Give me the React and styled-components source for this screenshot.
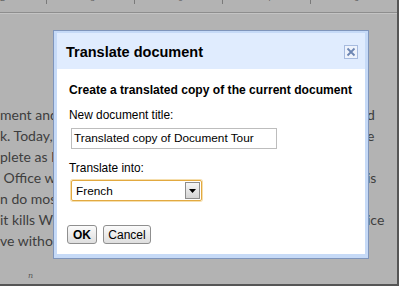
import React from "react";
import styled, { createGlobalStyle } from "styled-components";

const Global = createGlobalStyle`
    html, body {
        margin: 0;
        background: #ffffff;
    }
`;

const lines = [
    { left: "ment and", right: "d" },
    { left: "k. Today,", right: "e" },
    { left: "plete as M", right: "" },
    { left: " Office w", right: "is" },
    { left: "n do mos", right: "" },
    { left: "it kills W", right: "ice" },
    { left: "ve withou", right: "" },
];

const rulerMarks = ["2", "", "8", "", "0", "", "4", "", "6", ""];

function Ruler() {
    return (
        <RulerBar>
            {rulerMarks.map((m, i) => (
                <Mark key={i}>{m ? <Digit>{m}</Digit> : <Tick />}</Mark>
            ))}
        </RulerBar>
    );
}

function CloseIcon() {
    return (
        <svg width="10" height="10" viewBox="0 0 10 10">
            <path d="M1.5 1.5 L8.5 8.5 M8.5 1.5 L1.5 8.5" stroke="#6d86b3" strokeWidth="1.8" />
        </svg>
    );
}

function Dialog() {
    return (
        <Frame>
            <Header>
                <Title>Translate document</Title>
                <CloseBox>
                    <CloseIcon />
                </CloseBox>
            </Header>
            <Content>
                <Lead>Create a translated copy of the current document</Lead>
                <Label>New document title:</Label>
                <TextInput>Translated copy of Document Tour</TextInput>
                <Label $gap={12}>Translate into:</Label>
                <Select>
                    <SelectValue>French</SelectValue>
                    <SelectArrow>
                        <svg width="7" height="4" viewBox="0 0 7 4">
                            <path d="M0 0 H7 L3.5 4 Z" fill="#000" />
                        </svg>
                    </SelectArrow>
                </Select>
                <Buttons>
                    <Button $bold $w={30}>OK</Button>
                    <Button $w={48}>Cancel</Button>
                </Buttons>
            </Content>
        </Frame>
    );
}

export default function App() {
    return (
        <>
            <Global />
            <Page>
                <Ruler />
                <Body>
                    {lines.map((l, i) => (
                        <Line key={i}>
                            <LeftText>{l.left}</LeftText>
                            <RightText>{l.right}</RightText>
                        </Line>
                    ))}
                    <Footer>n</Footer>
                    <Dialog />
                </Body>
            </Page>
        </>
    );
}

const Page = styled.div`
    width: 399px;
    height: 286px;
    box-sizing: border-box;
    background: #b3b3b3;
    border-right: 2px solid #555;
    border-bottom: 2px solid #555;
    display: flex;
    flex-direction: column;
    overflow: hidden;
`;
const RulerBar = styled.div`
    height: 12px;
    flex: none;
    display: flex;
    border-bottom: 1px solid #8e8e8e;
    box-shadow: 0 1px 0 #c4c4c4;
    overflow: hidden;
`;
const Mark = styled.div`
    width: 44px;
    flex: none;
    display: flex;
    justify-content: flex-start;
    align-items: flex-start;
    &:first-child {
        width: 46px;
    }
`;
const Digit = styled.span`
    font-family: "Liberation Sans", Arial, sans-serif;
    font-size: 9px;
    line-height: 9px;
    color: #666;
    margin-top: -6px;
`;
const Tick = styled.span`
    width: 1px;
    height: 4px;
    background: #7a7a7a;
`;
const Body = styled.div`
    position: relative;
    flex: 1;
    display: flex;
    flex-direction: column;
    padding-top: 91px;
`;
const Line = styled.div`
    display: grid;
    grid-template-columns: 54px 1fr;
    column-gap: 313px;
    height: 21px;
    line-height: 21px;
    font-family: Lato, "Open Sans", sans-serif;
    font-size: 14px;
    color: #3e3e3e;
`;
const LeftText = styled.span`
    white-space: pre;
    overflow: hidden;
`;
const RightText = styled.span`
    white-space: pre;
    overflow: hidden;
`;
const Footer = styled.div`
    margin-top: auto;
    padding: 0 0 3px 28px;
    font-family: "DejaVu Serif", serif;
    font-style: italic;
    font-size: 8px;
    line-height: 10px;
    color: #555;
`;
const Frame = styled.div`
    position: absolute;
    left: 53px;
    top: 17px;
    width: 316px;
    height: 229px;
    box-sizing: border-box;
    border: 1px solid #7f95bb;
    background: #c6daf7;
    padding: 2px 3px 4px 3px;
    display: flex;
    flex-direction: column;
    font-family: "Liberation Sans", Arial, sans-serif;
    color: #000;
`;
const Header = styled.div`
    height: 36px;
    flex: none;
    background: #e0ecfe;
    display: flex;
    align-items: center;
    justify-content: space-between;
    padding: 2px 7px 0 9px;
    box-sizing: border-box;
`;
const Title = styled.div`
    font-size: 14.5px;
    font-weight: bold;
`;
const CloseBox = styled.div`
    width: 14px;
    height: 14px;
    box-sizing: border-box;
    border: 1px solid #a7bbdf;
    background: #eef3fc;
    display: flex;
    align-items: center;
    justify-content: center;
`;
const Content = styled.div`
    flex: 1;
    background: #fff;
    padding: 14px 12px 0 12px;
    display: flex;
    flex-direction: column;
    align-items: flex-start;
`;
const Lead = styled.div`
    font-size: 12.1px;
    font-weight: bold;
    line-height: 15px;
`;
const Label = styled.div`
    font-size: 11.9px;
    line-height: 15px;
    margin-top: ${(p) => p.$gap || 10}px;
`;
const TextInput = styled.div`
    margin: 5px 0 0 2px;
    width: 206px;
    height: 21px;
    box-sizing: border-box;
    border: 1px solid #bdbdbd;
    padding-left: 2px;
    font-size: 11.8px;
    line-height: 19px;
    white-space: nowrap;
`;
const Select = styled.div`
    margin: 4px 0 0 2px;
    width: 131px;
    height: 21px;
    box-sizing: border-box;
    border: 1px solid #e2a940;
    box-shadow: 0 0 0 1px #f6dfae;
    border-radius: 2px;
    display: flex;
    align-items: center;
    justify-content: space-between;
    padding: 0 1px 0 4px;
`;
const SelectValue = styled.span`
    font-size: 11.8px;
`;
const SelectArrow = styled.div`
    width: 15px;
    height: 17px;
    box-sizing: border-box;
    border: 1px solid #8c8c8c;
    background: linear-gradient(#f6f6f6, #d4d4d4);
    display: flex;
    align-items: center;
    justify-content: center;
`;
const Buttons = styled.div`
    margin: 24px 0 0 -2px;
    display: flex;
    gap: 6px;
`;
const Button = styled.div`
    width: ${(p) => p.$w}px;
    height: 19px;
    box-sizing: border-box;
    border: 1px solid #8f8f8f;
    border-radius: 3px;
    background: linear-gradient(#fbfbfb, #dedede);
    font-size: 12px;
    font-weight: ${(p) => (p.$bold ? "bold" : "normal")};
    display: flex;
    align-items: center;
    justify-content: center;
`;
